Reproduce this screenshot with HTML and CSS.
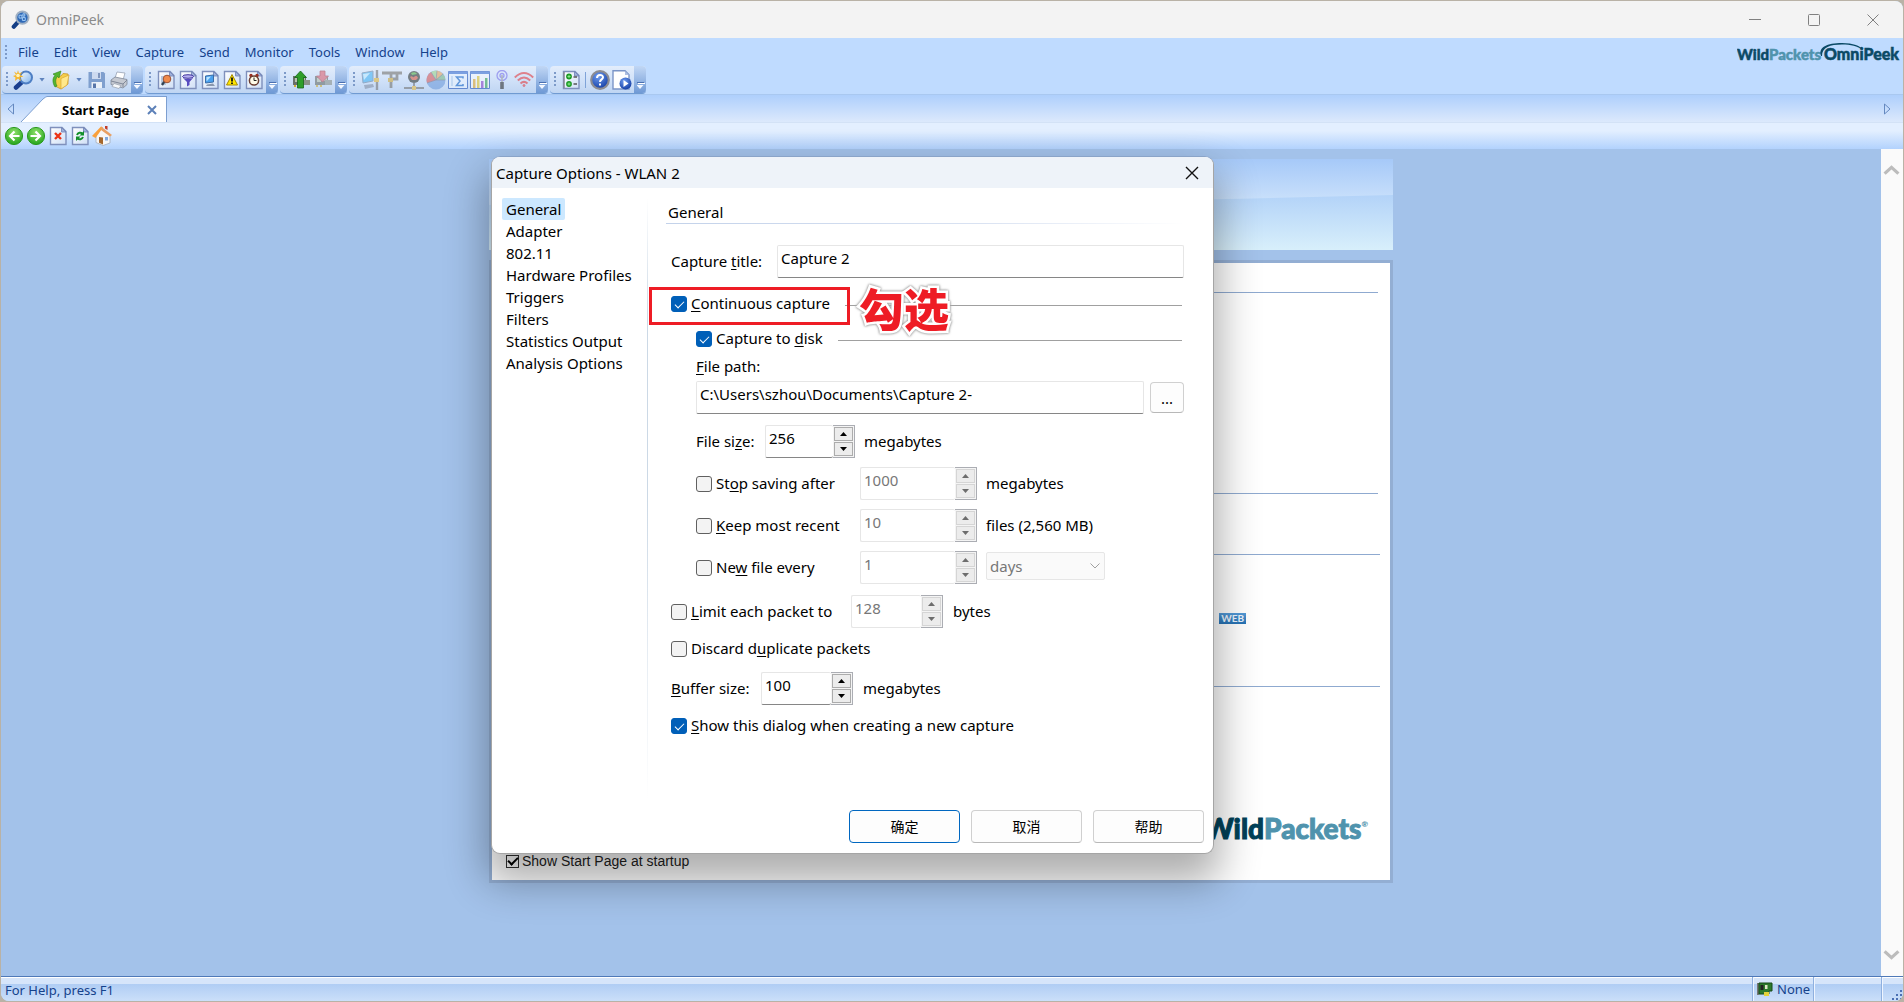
FILE: index.html
```html
<!DOCTYPE html>
<html lang="en">
<head>
<meta charset="utf-8">
<title>OmniPeek</title>
<link rel="stylesheet" href="styles.css">
</head>
<body>
<svg class="defs" width="0" height="0" aria-hidden="true">
  <defs>
    <linearGradient id="g-lens" x1="0" y1="0" x2="1" y2="1"><stop offset="0" stop-color="#f4fbff"/><stop offset="1" stop-color="#7fb2ea"/></linearGradient>
    <linearGradient id="g-page" x1="0" y1="0" x2="1" y2="1"><stop offset="0" stop-color="#ffffff"/><stop offset="1" stop-color="#cfdff6"/></linearGradient>
    <radialGradient id="g-green" cx=".5" cy=".3" r=".8"><stop offset="0" stop-color="#8fe06a"/><stop offset="1" stop-color="#169c12"/></radialGradient>
    <radialGradient id="g-blue" cx=".4" cy=".3" r=".8"><stop offset="0" stop-color="#6e9cf0"/><stop offset="1" stop-color="#0b349c"/></radialGradient>
    <linearGradient id="g-band-top" x1="0" y1="0" x2="0" y2="1"><stop offset="0" stop-color="#a6c9f8"/><stop offset=".45" stop-color="#c9e0fb"/></linearGradient>
    <linearGradient id="g-band-low" x1="0" y1="0" x2="0" y2="1"><stop offset="0" stop-color="#b3d3f8"/><stop offset="1" stop-color="#d8effb"/></linearGradient>
    <symbol id="page" viewBox="0 0 20 20"><path d="M2.500 1.500h11.500l4 4v13h-15.500z" fill="url(#g-page)" stroke="#7f90bc" stroke-width="1.400"/><path d="M13.500 1.500v4.500h4.500z" fill="#9fb2dc" stroke="#6f82b4" stroke-width=".8"/></symbol>
    <symbol id="board" viewBox="0 0 20 20"><path d="M2 6h13v9H2z" fill="#69706b"/><path d="M4 8h4v4H4zM10 8h4v3h-4z" fill="#b9c2ae"/><path d="M12 10h7v5h-7z" fill="#8c938b"/><path d="M3 15h2v2H3zM7 15h2v2H7z" fill="#d0ad33"/></symbol>
  </defs>
</svg>

<div class="window">
  <header class="titlebar">
    <svg class="app-icon" viewBox="0 0 20 20"><path d="M8 12 3 17.500" stroke="#153f86" stroke-width="4.600" stroke-linecap="round"/><circle cx="12" cy="8" r="6.500" fill="#2d69b8" stroke="#9fb0c4" stroke-width="2"/><path d="M8.500 5.500h3v3h-3zM12 8h3v3h-3zM12.500 4h2v2.500h-2z" fill="none" stroke="#a8d0f8"/></svg>
    <h1 class="app-name">OmniPeek</h1>
    <div class="win-controls">
      <button aria-label="Minimize"><svg viewBox="0 0 12 12"><path d="M0 5.500h12"/></svg></button>
      <button aria-label="Maximize"><svg viewBox="0 0 12 12"><rect x=".5" y=".5" width="11" height="11" rx="1"/></svg></button>
      <button aria-label="Close"><svg viewBox="0 0 12 12"><path d="M.5.5l11 11M11.500.5l-11 11"/></svg></button>
    </div>
  </header>

  <div class="bars">
    <div class="bars-left">
      <nav class="menu">
        <i class="grip"></i>
        <button>File</button><button>Edit</button><button>View</button><button>Capture</button><button>Send</button><button>Monitor</button><button>Tools</button><button>Window</button><button>Help</button>
      </nav>
      <div class="toolbar">
        <div class="group">
          <i class="grip"></i>
          <button class="tool" aria-label="New capture"><svg viewBox="0 0 20 20"><path d="M9 12 3 17.500" stroke="#1b3f8f" stroke-width="4.500" stroke-linecap="round"/><circle cx="13" cy="7.500" r="6" fill="url(#g-lens)" stroke="#4e7fc4" stroke-width="2"/><path d="M5 0l1 3.500L9.500 2 7 5l3.500 1.500L7 7.500 8 11 5 8.500 2 11l.5-3.500L0 6l3-1L1 1.500 4 3.500z" fill="#f5b62c"/><circle cx="5" cy="5.500" r="1.800" fill="#fff3b8"/></svg></button>
          <button class="drop" aria-label="New options"></button>
          <button class="tool" aria-label="Open"><svg viewBox="0 0 20 20"><path d="M4 7l7-1 2-2.500 5 .5v10l-7 5-6-3z" fill="#f6cf4b" stroke="#c9972a" stroke-width=".8"/><path d="M11 8.500l8-3.500-2 10-6 4z" fill="#ffe88a" stroke="#d9a736" stroke-width=".7"/><path d="M5 17C2 12 2.500 8 5 5.500L3 4l8-3-2 7-1.500-1.500C5.500 9 5 12 7 16z" fill="#55b531" stroke="#2f861d" stroke-width=".6"/></svg></button>
          <button class="drop" aria-label="Open options"></button>
          <button class="tool" aria-label="Save"><svg viewBox="0 0 20 20"><path d="M1.500 2h15l1.500 1.500V18h-16.500z" fill="#7f9fce"/><path d="M5 2h9v7H5z" fill="#cddaf0"/><path d="M11 3h2v5h-2z" fill="#7f95bd"/><path d="M4.500 12H15v6H4.500z" fill="#eaf0f8"/><path d="M6 13.500h3v4.500H6z" fill="#5876a9"/></svg></button>
          <button class="tool" aria-label="Print"><svg viewBox="0 0 20 20"><path d="M6 8l2-6 8 1-2 7z" fill="#fff" stroke="#98a2b4" stroke-width=".8"/><path d="M2 10l4-3 12 2.500v5l-4 3.500-12-3.500z" fill="#c5c9d1" stroke="#7f8898" stroke-width=".8"/><path d="M2 11l12 3v3M14 14l4-4" fill="none" stroke="#808898"/><path d="M5 13.500l7 2-2 3-7-2z" fill="#f7f9fb" stroke="#979fac" stroke-width=".7"/></svg></button>
          <button class="overflow" aria-label="Toolbar options"></button>
        </div>
        <div class="group">
          <i class="grip"></i>
          <button class="tool" aria-label="Packets"><svg viewBox="0 0 20 20"><use href="#page"/><path d="M5 6h5v9H5z" fill="#b8c7dc"/><path d="M8.500 11.500L6 15" stroke="#345" stroke-width="2.200"/><circle cx="11" cy="9" r="3.800" fill="#f08a4b" stroke="#9b5236"/></svg></button>
          <button class="tool" aria-label="Filter"><svg viewBox="0 0 20 20"><use href="#page"/><ellipse cx="10" cy="6.500" rx="5.500" ry="1.800" fill="#b6aef0" stroke="#40339c"/><path d="M4.500 7.500l4.500 4.500v4.500l2.500-1.500V12L15.500 7.500c-3 2-8 2-11 0z" fill="#584bc0"/></svg></button>
          <button class="tool" aria-label="Monitor"><svg viewBox="0 0 20 20"><use href="#page"/><path d="M5.500 6l8-1v7l-8 1z" fill="#4aa0ee" stroke="#3b6da6"/><path d="M6.500 7l4.500-.5-4 4.500h-.5z" fill="#b8e4ff"/><path d="M7 14.500l6-1 2 2.500H6z" fill="#8a97ad"/></svg></button>
          <button class="tool" aria-label="Alarms"><svg viewBox="0 0 20 20"><use href="#page"/><path d="M10 4.500l5.500 10.500h-11z" fill="#ffe600" stroke="#a68a00"/><path d="M10 7.500v4M10 12.500v1.500" stroke="#111" stroke-width="1.800"/></svg></button>
          <button class="tool" aria-label="Triggers"><svg viewBox="0 0 20 20"><use href="#page"/><circle cx="7" cy="5.500" r="1.700" fill="#9b3022"/><circle cx="13" cy="5.500" r="1.700" fill="#9b3022"/><circle cx="10" cy="10.500" r="4.600" fill="#fffbe8" stroke="#6b3f32" stroke-width="1.500"/><path d="M10 7.500v3h2.500" fill="none" stroke="#222"/></svg></button>
          <button class="overflow" aria-label="Toolbar options"></button>
        </div>
        <div class="group">
          <i class="grip"></i>
          <button class="tool" aria-label="Start send"><svg viewBox="0 0 20 20"><use href="#board"/><path d="M9.500 1L15.500 7.500H12.500V18H6.500V7.500H3.500z" fill="#2f9e2a" stroke="#17661a" stroke-width=".8"/></svg></button>
          <button class="tool dim" aria-label="Stop send"><svg viewBox="0 0 20 20"><use href="#board"/><path d="M7 1h5v5h3.500L9.500 12 3.500 6H7z" fill="#dc6474" stroke="#a8424e" stroke-width=".8"/></svg></button>
          <button class="overflow" aria-label="Toolbar options"></button>
        </div>
        <div class="group">
          <i class="grip"></i>
          <button class="tool dim" aria-label="Nodes"><svg viewBox="0 0 20 20"><path d="M2 3l11-2v10L3 13z" fill="#48b4f4" stroke="#6d86a5"/><path d="M3 4l7-1-6 7z" fill="#bfeaff"/><path d="M4 15l9-1 1 3-9 2z" fill="#8592a8"/><path d="M17 0v20" stroke="#777" stroke-width="2.400"/><path d="M14 10h5" stroke="#e3b73a" stroke-width="4"/></svg></button>
          <button class="tool dim" aria-label="Protocols"><svg viewBox="0 0 20 20"><path d="M0 3h20M9 3v15M9 9h6V3" fill="none" stroke="#77756f" stroke-width="2.800"/><path d="M6 8h5v4H6z" fill="#cda83d"/></svg></button>
          <button class="tool dim" aria-label="Network"><svg viewBox="0 0 20 20"><path d="M0 18h20M10 13v5" stroke="#777" stroke-width="2"/><circle cx="10" cy="7" r="6" fill="#353a35"/><path d="M6 7c2-2 3 1 4 0s3-2 4 1l-2 2H8z" fill="#d85b44"/><path d="M7 3c2-1 5-1 6 1l-5 1z" fill="#57b345"/><path d="M8 16h4v4H8z" fill="#e4b944"/></svg></button>
          <button class="tool dim" aria-label="Pie chart"><svg viewBox="0 0 20 20"><circle cx="10" cy="10" r="9.500" fill="#6f9cdc"/><path d="M10 10L1 13A9.500 9.500 0 0 1 5 2z" fill="#d65b5b"/><path d="M10 10L5 2a9.500 9.500 0 0 1 6-1.500z" fill="#9bd48c"/><path d="M10 10l1-9.500A9.500 9.500 0 0 1 17 4z" fill="#e8a55e"/><path d="M10 10l7-6a9.500 9.500 0 0 1 2.500 6z" fill="#7ab889"/><path d="M10 10L1 13M10 10L5 2M10 10l1-9M10 10l7-6M10 10h9" stroke="#667" stroke-width=".6"/></svg></button>
          <button class="tool dim" aria-label="Summary"><svg viewBox="0 0 20 20"><path d="M.5 1.500h19v17H.5z" fill="#edf5ff" stroke="#2455b8"/><path d="M.5 1.500h19v2.500H.5z" fill="#3e72d2"/><path d="M4 6v10" stroke="#8db6e4"/><path d="M15 8.500V7H8.500l3.500 4-3.500 4.500h6.500V14" fill="none" stroke="#1766c8" stroke-width="1.500"/></svg></button>
          <button class="tool dim" aria-label="Graphs"><svg viewBox="0 0 20 20"><path d="M.5 1.500h19v17H.5z" fill="#f8fbff" stroke="#2455b8"/><path d="M.5 1.500h19v2.500H.5z" fill="#3e72d2"/><path d="M3 9h2.500v9H3z" fill="#e5a92f"/><path d="M7 6h2.500v12H7z" fill="#e5c72f"/><path d="M11 11h2.500v7H11z" fill="#8d48c8"/><path d="M15 8h2.500v10H15z" fill="#3aa550"/></svg></button>
          <button class="tool dim" aria-label="Wireless"><svg viewBox="0 0 20 20"><circle cx="10" cy="5.500" r="5" fill="none" stroke="#7770ea" stroke-width="1.300"/><circle cx="10" cy="5.500" r="2" fill="none" stroke="#7770ea" stroke-width="1.300"/><path d="M10 5v9" stroke="#999" stroke-width="1.600"/><path d="M10 12v7" stroke="#333" stroke-width="3.600"/></svg></button>
          <button class="tool dim" aria-label="Signal"><svg viewBox="0 0 20 20" fill="none" stroke="#e23f44" stroke-width="2"><path d="M.8 7.500q9.200-9 18.400 0M3.800 10.500q6.200-6 12.400 0M6.500 13.500q3.500-3.300 7 0"/><circle cx="10" cy="15.500" r="1" fill="#e23f44" stroke-width="1"/></svg></button>
          <button class="overflow" aria-label="Toolbar options"></button>
        </div>
        <div class="group">
          <i class="grip"></i>
          <button class="tool" aria-label="Options"><svg viewBox="0 0 20 20"><use href="#page"/><path d="M3 2v16" stroke="#889" stroke-width="1.500"/><circle cx="8" cy="6.500" r="2.900" fill="#1c9a25"/><circle cx="8" cy="14" r="2.900" fill="#1c9a25"/><path d="M6.500 6.500h3M8 5v3M6.500 14h3M8 12.500v3" stroke="#8be88a"/><path d="M12.500 7h3.500M12.500 14h3.500" stroke="#555" stroke-width="1.400"/></svg></button>
          <i class="divider"></i>
          <button class="tool" aria-label="Help"><svg viewBox="0 0 20 20"><circle cx="10" cy="10" r="8.800" fill="url(#g-blue)" stroke="#8c8c92" stroke-width="2.200"/><path d="M7 8c0-4 6-4 6-.700 0 2.200-3 2-3 4.700M10 13.500v2" fill="none" stroke="#fff" stroke-width="2"/></svg></button>
          <button class="tool" aria-label="Start page"><svg viewBox="0 0 20 20"><path d="M1 .800h12l4 4V19H1z" fill="#fff" stroke="#7b95c8" stroke-width="1.400"/><path d="M13 1v4h4z" fill="#aebfe2"/><circle cx="13.500" cy="13.500" r="6" fill="url(#g-blue)"/><path d="M11.500 10l5 3.500-5 3.500z" fill="#fff"/></svg></button>
          <button class="overflow" aria-label="Toolbar options"></button>
        </div>
      </div>
    </div>
    <svg class="brand" viewBox="0 0 166 24"><text x="0" y="20" class="brand-text"><tspan fill="#0b4a66" stroke="#0b4a66">Wild</tspan><tspan fill="#4f93ad" stroke="#4f93ad">Packets</tspan></text><text x="87" y="20" class="brand-text omni" fill="#0b4a66" stroke="#0b4a66">OmniPeek</text><path d="M84 16C81 7 90 3 105 3c11 0 19 3 21 7-6-4-12-5.500-21-5.500C93 4.500 85 7 85 16z" fill="#0b4a66"/></svg>
  </div>

  <div class="tabs">
    <svg class="tab-arrow" viewBox="0 0 8 12"><path d="M6.500 1v10l-5.500-5z"/></svg>
    <div class="tab">
      <svg class="tab-slope" viewBox="0 0 26 26" preserveAspectRatio="none"><path d="M0 26 22 3q3-2.500 4-2.500V26z" fill="#fff"/><path d="M0 26 22 3q3-2.500 4-2.500" fill="none" stroke="#7d9fd0"/></svg>
      <div class="tab-body">Start Page
        <button class="tab-close" aria-label="Close tab"><svg viewBox="0 0 10 10"><path d="M1 1l8 8M9 1l-8 8"/></svg></button>
      </div>
    </div>
    <svg class="tab-arrow next" viewBox="0 0 8 12"><path d="M1.500 1v10l5.500-5z"/></svg>
  </div>

  <div class="browser-bar">
    <button class="tool" aria-label="Back"><svg viewBox="0 0 20 20"><circle cx="10" cy="10" r="8.600" fill="url(#g-green)" stroke="#2c9a20"/><path d="M15.500 10h-9M10.500 5.500L6 10l4.500 4.500" fill="none" stroke="#fff" stroke-width="2.200"/></svg></button>
    <button class="tool" aria-label="Forward"><svg viewBox="0 0 20 20"><circle cx="10" cy="10" r="8.600" fill="url(#g-green)" stroke="#2c9a20"/><path d="M4.500 10h9M9.500 5.500L14 10l-4.500 4.500" fill="none" stroke="#fff" stroke-width="2.200"/></svg></button>
    <button class="tool" aria-label="Stop"><svg viewBox="0 0 20 20"><use href="#page"/><path d="M7 7l6 6M13 7l-6 6" stroke="#ec3316" stroke-width="2.400"/></svg></button>
    <button class="tool" aria-label="Refresh"><svg viewBox="0 0 20 20"><use href="#page"/><path d="M7 9c1-2.500 3.500-3 5.500-1.500M13 11c-1 2.500-3.500 3-5.500 1.500" fill="none" stroke="#12902a" stroke-width="2"/><path d="M14 5v4.500h-4.500zM6 15v-4.500h4.500z" fill="#12902a"/></svg></button>
    <button class="tool" aria-label="Home"><svg viewBox="0 0 20 20"><path d="M4 9l5-6 9 6v8l-7 2.500-7-3z" fill="#f7f7f8" stroke="#a6acb8" stroke-width=".8"/><path d="M0 10L9 .500l2 1L3.500 12z" fill="#f9a03c"/><path d="M9 .500L20 9l-2 1.500L9 4z" fill="#e9a064"/><path d="M13 0h2.500v4L13 2.500z" fill="#c13c28"/><path d="M7 11l4 .500v7l-4-1.800z" fill="#a5672c"/><path d="M13 11h3v3.500h-3z" fill="#80a8dd"/></svg></button>
  </div>

  <div class="workspace">
    <main class="start">
      <div class="banner"><svg viewBox="0 0 904 91" preserveAspectRatio="none"><rect width="904" height="91" fill="url(#g-band-top)"/><path d="M0 46Q550 46 904 36V91H0z" fill="url(#g-band-low)"/></svg></div>
      <section class="start-page">
        <div class="rule r1"></div>
        <div class="rule r2"></div>
        <div class="rule r3"></div>
        <div class="web-row"><span class="web">WEB</span></div>
        <div class="rule r4"></div>
        <div class="logo"><span class="logo-a">Wild</span><span class="logo-b">Packets</span><sup>®</sup></div>
        <label class="startup"><input type="checkbox" checked> Show Start Page at startup</label>
      </section>
    </main>
    <div class="scrollbar">
      <svg viewBox="0 0 16 14"><path d="M1.500 10 8 4l6.500 6"/></svg>
      <svg viewBox="0 0 16 14"><path d="M1.500 4 8 10l6.500-6"/></svg>
    </div>
  </div>

  <footer class="status">
    <span class="status-text">For Help, press F1</span>
    <span class="status-cell adapter"><svg viewBox="0 0 16 14"><path d="M0 1h2v12H0z" fill="#777"/><path d="M2 1h13v8h-3v3H2z" fill="#2d7a2c" stroke="#174a18"/><path d="M3.500 3h3v5h-3z" fill="#222"/><path d="M8 3h2.500v4H8z" fill="#dfe7c8"/><path d="M7 10h5v4H7z" fill="#e5d33a"/></svg>None</span>
    <span class="status-cell blank"></span>
    <span class="status-cell corner"><svg viewBox="0 0 12 12" fill="#4b70b4"><path d="M9 1h2v2H9zM5 5h2v2H5zM9 5h2v2H9zM1 9h2v2H1zM5 9h2v2H5zM9 9h2v2H9z"/></svg></span>
  </footer>
</div>

<div class="dialog" role="dialog" aria-labelledby="dlg-title">
  <header class="dialog-head">
    <h2 id="dlg-title">Capture Options - WLAN 2</h2>
    <button class="dialog-close" aria-label="Close"><svg viewBox="0 0 14 14"><path d="M1 1l12 12M13 1L1 13"/></svg></button>
  </header>
  <div class="dialog-body">
    <nav class="pages">
      <a href="#" class="current">General</a>
      <a href="#">Adapter</a>
      <a href="#">802.11</a>
      <a href="#">Hardware Profiles</a>
      <a href="#">Triggers</a>
      <a href="#">Filters</a>
      <a href="#">Statistics Output</a>
      <a href="#">Analysis Options</a>
    </nav>
    <form class="form" id="options">
      <h3>General</h3>
      <div class="row title-row">
        <label for="title">Capture <u>t</u>itle:</label>
        <input class="text" id="title" type="text" value="Capture 2">
      </div>
      <div class="row line-row">
        <input type="checkbox" id="cont" checked><label for="cont"><u>C</u>ontinuous capture</label><i class="hr"></i>
        <div class="callout"></div><span class="callout-text">勾选</span>
      </div>
      <div class="row line-row indent">
        <input type="checkbox" id="disk" checked><label for="disk">Capture to <u>d</u>isk</label><i class="hr"></i>
      </div>
      <div class="row path-label indent"><label for="path"><u>F</u>ile path:</label></div>
      <div class="row path-row indent">
        <input class="text" id="path" type="text" value="C:\Users\szhou\Documents\Capture 2-">
        <button class="btn browse" type="button">...</button>
      </div>
      <div class="row field indent">
        <label class="size-label" for="fsize">File si<u>z</u>e:</label>
        <div class="spin w-size"><input id="fsize" type="text" value="256"><span class="arrows"><button type="button" aria-label="Up"></button><button type="button" aria-label="Down"></button></span></div>
        <span class="unit">megabytes</span>
      </div>
      <div class="row field indent">
        <span class="check"><input type="checkbox" id="stop"><label for="stop">St<u>o</u>p saving after</label></span>
        <div class="spin w-wide"><input type="text" value="1000" aria-label="Stop saving after" disabled><span class="arrows"><button type="button" aria-label="Up" disabled></button><button type="button" aria-label="Down" disabled></button></span></div>
        <span class="unit">megabytes</span>
      </div>
      <div class="row field indent">
        <span class="check"><input type="checkbox" id="keep"><label for="keep"><u>K</u>eep most recent</label></span>
        <div class="spin w-wide"><input type="text" value="10" aria-label="Files to keep" disabled><span class="arrows"><button type="button" aria-label="Up" disabled></button><button type="button" aria-label="Down" disabled></button></span></div>
        <span class="unit">files (2,560 MB)</span>
      </div>
      <div class="row field indent">
        <span class="check"><input type="checkbox" id="newf"><label for="newf">Ne<u>w</u> file every</label></span>
        <div class="spin w-wide"><input type="text" value="1" aria-label="New file interval" disabled><span class="arrows"><button type="button" aria-label="Up" disabled></button><button type="button" aria-label="Down" disabled></button></span></div>
        <span class="combo"><select aria-label="Interval unit" disabled><option>days</option></select><svg viewBox="0 0 10 6"><path d="M.5.5 5 5 9.500.5"/></svg></span>
      </div>
      <div class="row field outer">
        <span class="check limit"><input type="checkbox" id="limit"><label for="limit"><u>L</u>imit each packet to</label></span>
        <div class="spin w-mid"><input type="text" value="128" aria-label="Packet bytes" disabled><span class="arrows"><button type="button" aria-label="Up" disabled></button><button type="button" aria-label="Down" disabled></button></span></div>
        <span class="unit">bytes</span>
      </div>
      <div class="row line-row"><input type="checkbox" id="dup"><label for="dup">Discard d<u>u</u>plicate packets</label></div>
      <div class="row field outer">
        <label class="buffer-label" for="buf"><u>B</u>uffer size:</label>
        <div class="spin w-mid"><input id="buf" type="text" value="100"><span class="arrows"><button type="button" aria-label="Up"></button><button type="button" aria-label="Down"></button></span></div>
        <span class="unit">megabytes</span>
      </div>
      <div class="row line-row"><input type="checkbox" id="show" checked><label for="show"><u>S</u>how this dialog when creating a new capture</label></div>
    </form>
  </div>
  <footer class="actions">
    <button class="btn primary" type="submit" form="options">确定</button>
    <button class="btn" type="button">取消</button>
    <button class="btn" type="button">帮助</button>
  </footer>
</div>
</body>
</html>
```
FILE: styles.css
```css
* { box-sizing: border-box; }

body {
  margin: 0;
  min-height: 100vh;
  display: flex;
  background: #b9b2a6;
  color: #000;
  font: 15px/20px "Noto Sans", "Noto Sans CJK SC", sans-serif;
}

button, input, select { font: inherit; color: inherit; margin: 0; }
button { padding: 0; border: 0; background: none; }
h1, h2, h3 { margin: 0; font-size: 15px; font-weight: 400; }
svg { display: block; }
u { text-underline-offset: 2px; }
.defs { position: absolute; }

.window {
  flex: 1;
  display: flex;
  flex-direction: column;
  margin: 1px;
  border-radius: 8px;
  overflow: hidden;
  background: #bfdbff;
}

/* Title bar */
.titlebar {
  display: flex;
  align-items: center;
  height: 37px;
  padding-left: 10px;
  background: #f3f3f3;
}
.app-icon { width: 19px; height: 19px; }
.app-name { margin-left: 6px; font-size: 14px; color: #8b8b8b; }
.win-controls { margin-left: auto; display: flex; gap: 47px; margin-right: 24px; }
.win-controls svg { width: 12px; height: 12px; fill: none; stroke: #808080; }

/* Menu and toolbars */
.bars { display: flex; justify-content: space-between; }
.menu {
  display: flex;
  align-items: center;
  height: 28px;
  padding-left: 4px;
  color: #15428b;
  font-size: 13px;
}
.menu .grip { margin-right: 11px; }
.menu button { margin-right: 15px; }
.grip {
  width: 2px;
  height: 15px;
  background: repeating-linear-gradient(#7d9ac8 0 2px, transparent 2px 4px);
}
.toolbar { display: flex; gap: 2px; height: 28px; padding-left: 1px; }
.group {
  display: flex;
  align-items: center;
  gap: 2px;
  padding-left: 4px;
  border-bottom: 1px solid #6f9ad2;
  border-radius: 4px;
  background: linear-gradient(#e3edfb, #d3e3f9 45%, #bfd5f3);
}
.group .grip { margin-right: 3px; }
.tool svg { width: 20px; height: 20px; }
.dim svg { opacity: .6; }
.drop {
  width: 6px;
  height: 4px;
  margin: 0 3px 0 4px;
  background: #5f83bd;
  clip-path: polygon(0 0, 100% 0, 50% 100%);
}
.overflow {
  align-self: stretch;
  width: 12px;
  border-radius: 0 4px 4px 0;
  background: linear-gradient(#c1d7f5, #6f99d5);
  display: flex;
  flex-direction: column;
  align-items: center;
  justify-content: flex-end;
  gap: 2px;
  padding-bottom: 4px;
}
.overflow::before { content: ""; width: 7px; height: 1px; background: #4a6fb0; box-shadow: 1px 1px #fff; }
.overflow::after { content: ""; width: 7px; height: 4px; background: #f2f7ff; clip-path: polygon(0 0, 100% 0, 50% 100%); }
.divider { width: 1px; height: 16px; margin: 0 2px; background: #7fa3d8; }
.brand { width: 166px; height: 24px; margin-top: 2px; }
.brand-text { font: 900 15px Lato, sans-serif; stroke-width: .5px; }
.omni { font-size: 16px; }

/* Document tabs */
.tabs {
  display: flex;
  align-items: flex-end;
  height: 29px;
  padding: 0 12px 0 6px;
  border-top: 1px solid #a9c8f0;
  border-bottom: 1px solid #d3e2f6;
  background: linear-gradient(#aecffc, #dce9fc);
}
.tab-arrow { width: 8px; height: 12px; margin-bottom: 7px; fill: none; stroke: #6589c0; }
.next { margin-left: auto; }
.tab { display: flex; margin-left: 6px; }
.tab-slope { width: 26px; height: 26px; }
.tab-body {
  display: flex;
  align-items: center;
  height: 26px;
  padding: 0 9px 0 15px;
  border-top: 1px solid #7d9fd0;
  border-right: 1px solid #7d9fd0;
  background: #fff;
  font-size: 13px;
  font-weight: 700;
}
.tab-close { margin-left: 18px; }
.tab-close svg { width: 10px; height: 10px; stroke: #5c80b8; stroke-width: 2; }

.browser-bar {
  display: flex;
  align-items: center;
  gap: 2px;
  height: 26px;
  padding-left: 3px;
  background: linear-gradient(#e3efff 30%, #b2d2fd);
}

/* Workspace with the start page */
.workspace { flex: 1; display: flex; background: #a3c2ea; }
.start { width: 904px; margin: 10px auto 0; }
.banner svg { width: 100%; height: 91px; }
.start-page {
  display: flex;
  flex-direction: column;
  height: 623px;
  margin-top: 10px;
  padding: 0 10px 11px 14px;
  border: 3px solid #93aed3;
  background: #fff;
}
.rule { height: 1px; background: #8faad0; margin-right: 2px; }
.r1 { margin-top: 29px; }
.r2 { margin-top: 200px; }
.r3 { margin: 60px 0 0; }
.r4 { margin: 62px 0 0; }
.web-row { display: flex; justify-content: flex-end; margin: 58px 134px 0 0; }
.web {
  padding: 0 2px;
  background: linear-gradient(#559bd8, #2471b4);
  color: #eef6ff;
  font: 700 10px/11px Lato, sans-serif;
}
.logo {
  display: flex;
  justify-content: flex-end;
  margin-top: 125px;
  padding-right: 12px;
  font: 900 28px/32px Lato, sans-serif;
  -webkit-text-stroke: 1px;
}
.logo sup { font-size: 8px; line-height: 24px; color: #4f93ad; -webkit-text-stroke: 0; }
.logo-a { color: #004158; }
.logo-b { color: #4f93ad; }
.startup {
  display: flex;
  align-items: center;
  gap: 3px;
  margin-top: auto;
  font: 14px/16px "Liberation Sans", Arial, sans-serif;
  color: #222;
}
.startup input {
  appearance: none;
  display: grid;
  place-items: center;
  width: 13px;
  height: 13px;
  border: 1px solid #333;
  background: #fff;
}
.startup input::after {
  content: "";
  width: 8px;
  height: 4px;
  border: solid #000;
  border-width: 0 0 2px 2px;
  transform: translateY(-1px) rotate(-45deg);
}

.scrollbar {
  display: flex;
  flex-direction: column;
  justify-content: space-between;
  width: 22px;
  padding: 14px 2px;
  background: #fafafa;
}
.scrollbar svg { width: 17px; height: 15px; fill: none; stroke: #bcbcbc; stroke-width: 3; }

/* Status bar */
.status {
  display: flex;
  align-items: stretch;
  height: 25px;
  border-top: 1px solid #4f79b8;
  box-shadow: inset 0 1px #fff;
  background: linear-gradient(#d6e5fa 28%, #b0cdf4 30%, #cbdff9);
  color: #15428b;
  font-size: 13px;
  line-height: 26px;
}
.status-text { margin-left: 4px; margin-right: auto; }
.status-cell { display: flex; align-items: center; border-left: 1px solid #8fb0df; box-shadow: inset 1px 0 #eef5ff; }
.adapter { width: 61px; padding-left: 4px; gap: 4px; }
.adapter svg { width: 16px; height: 14px; }
.blank { width: 68px; }
.corner { width: 22px; align-items: flex-end; justify-content: flex-end; }
.corner svg { width: 12px; height: 12px; }

/* Capture options dialog */
.dialog {
  position: absolute;
  left: calc(50% - 461px);
  top: 156px;
  width: 723px;
  display: flex;
  flex-direction: column;
  border: 1px solid;
  border-color: #8aa4c8 #a5a5a5 #a5a5a5;
  border-radius: 9px;
  background: #fff;
  box-shadow: 0 22px 40px 6px rgba(0, 0, 0, .32);
}
.dialog-head {
  display: flex;
  align-items: center;
  justify-content: space-between;
  height: 31px;
  padding: 0 14px 0 4px;
  border-radius: 8px 8px 0 0;
  background: #eef3f9;
}
.dialog-close svg { width: 14px; height: 14px; stroke: #111; stroke-width: 1.4; }
.dialog-body { display: flex; min-height: 622px; padding: 10px 0 0 10px; }
.pages {
  width: 146px;
  display: flex;
  flex-direction: column;
  align-items: flex-start;
  margin-bottom: 10px;
  border-right: 1px solid;
  border-image: linear-gradient(#fff, #ccd9e6 20%, #ccd9e6 50%, #fff) 1;
}
.pages a {
  padding: 0 4px;
  border-radius: 2px;
  color: #000;
  line-height: 22px;
  text-decoration: none;
  white-space: nowrap;
}
.pages .current { background: #cce8ff; }

.form { flex: 1; padding: 4px 29px 0 23px; }
.form h3 {
  margin-left: -5px;
  padding-left: 2px;
  line-height: 21px;
  border-bottom: 1px solid;
  border-image: linear-gradient(90deg, #c3d2ea, #d9e2f2 60%, #fff) 1;
}
.row { position: relative; display: flex; align-items: center; height: 33px; }
.row label, .unit { padding-bottom: 2px; }
.title-row { margin-top: 21px; margin-bottom: 14px; justify-content: space-between; }
.line-row { height: 24px; gap: 4px; margin: 9px 0 11px; }
.path-label { height: 24px; margin-top: -7px; margin-bottom: 2px; }
.path-row { gap: 6px; margin-bottom: 11px; }
.field { margin-top: 9px; gap: 9px; }
.outer { margin-top: 11px; gap: 10px; }
.indent { margin-left: 25px; }
.hr { flex: 1; height: 1px; margin: 2px 2px 0 11px; background: #a0a0a0; }

.form input[type="checkbox"] {
  appearance: none;
  flex: none;
  display: grid;
  place-items: center;
  width: 16px;
  height: 16px;
  border: 1px solid #606060;
  border-radius: 3px;
  background: #f3f3f3;
}
.form input[type="checkbox"]:checked { background: #005fb8; border-color: #005fb8; }
.form input:checked::after {
  content: "";
  width: 8px;
  height: 4px;
  border: solid #fff;
  border-width: 0 0 1px 1px;
  transform: translateY(-1px) rotate(-45deg);
}
.text, .spin input {
  height: 33px;
  border: 1px solid #e6e6e6;
  border-bottom-color: #868686;
  border-radius: 2px;
  background: #fff;
  padding: 0 3px 7px;
}
#title { width: 407px; }
#path { flex: 1; }
.browse { width: 34px; height: 31px; }

.check { display: flex; align-items: center; gap: 4px; width: 155px; white-space: nowrap; }
.limit { width: 170px; }
.size-label { width: 60px; }
.buffer-label { width: 80px; }
.spin { display: flex; }
.spin input { flex: 1; width: 0; border-right: 0; }
.spin input:disabled { border-bottom-color: #e6e6e6; color: #777; }
.w-size { width: 90px; }
.w-mid { width: 92px; }
.w-wide { width: 117px; }
.arrows {
  width: 22px;
  display: grid;
  gap: 1px;
  padding: 1px;
  border: 1px solid #abadb3;
  border-left: 0;
  background: #f4f4f4;
}
.arrows button { display: grid; place-items: center; border: 1px solid #acacac; background: #ececec; }
.arrows button::after {
  content: "";
  width: 7px;
  height: 4px;
  background: #000;
  clip-path: polygon(50% 0, 100% 100%, 0 100%);
}
.arrows button + button::after { clip-path: polygon(0 0, 100% 0, 50% 100%); }
.arrows button:disabled { border-color: #d5d5d5; }
.arrows button:disabled::after { background: #6d6d6d; }

.combo { display: grid; align-items: center; margin-bottom: 3px; }
.combo > * { grid-area: 1 / 1; }
.combo select {
  appearance: none;
  width: 119px;
  height: 28px;
  padding: 0 3px;
  border: 1px solid #e6e6e6;
  border-radius: 2px;
  background: #fafafa;
  color: #777;
  opacity: 1;
}
.combo svg { justify-self: end; width: 10px; height: 6px; margin-right: 5px; fill: none; stroke: #a0a0a0; }

/* Highlight drawn over the form */
.callout {
  position: absolute;
  left: -22px;
  top: -5px;
  width: 201px;
  height: 38px;
  border: 3px solid #ee1c25;
}
.callout-text {
  position: absolute;
  left: 188px;
  top: -12px;
  font: 900 45px/56px "Noto Sans CJK SC", sans-serif;
  color: #ee1c25;
  -webkit-text-stroke: 5px #fff;
  paint-order: stroke fill;
  filter: drop-shadow(0 0 1px #999) drop-shadow(0 0 1px #bbb);
}

.btn {
  border: 1px solid #d0d0d0;
  border-bottom-color: #b8b8b8;
  border-radius: 4px;
  background: #fdfdfd;
}
.actions { display: flex; justify-content: flex-end; gap: 11px; padding: 0 9px 10px; }
.actions .btn { width: 111px; height: 33px; font-size: 14px; }
.actions .primary { border-color: #0067c0; }
```
